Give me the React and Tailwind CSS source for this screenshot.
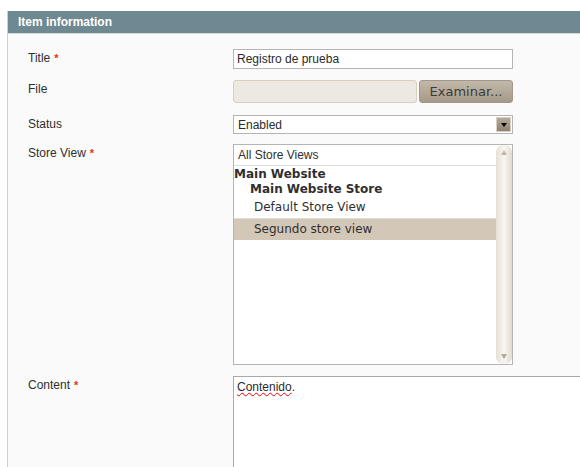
import React from 'react';

const arial = { fontFamily: '"Liberation Sans", Arial, sans-serif' };
const dejavu = { fontFamily: '"DejaVu Sans", Verdana, sans-serif' };

const Req = () => <span className="ml-[4px] text-[11px] font-bold text-[#eb340a]">*</span>;

const Row = ({ label, required, children, className }) => (
    <div className={"flex " + (className || '')}>
        <div className="w-[205px] shrink-0 text-[12px] leading-[18px] text-[#2f2f2f]">
            {label}
            {required && <Req />}
        </div>
        {children}
    </div>
);

const App = () => {
    return (
        <div className="w-[580px] h-[467px] overflow-hidden bg-white pt-[11px]" style={arial}>
            <div className="ml-[7px] w-[600px] border-l border-[#cfcfcf] h-full">
                {/* header */}
                <div className="h-[22px] bg-[#6f8992] pl-[10px] text-[12px] font-bold leading-[22px] text-white">
                    Item information
                </div>
                <div className="h-[1px] bg-[#d6d6d6]" />

                <div className="bg-[#fafafa] h-full pl-[20px] pt-[15px]">
                    <Row label="Title" required className="mb-[11px]">
                        <div className="w-[280px] h-[20px] border border-[#b5b5b5] bg-white px-[3px] text-[12px] leading-[18px] text-[#2b2b2b]">
                            Registro de prueba
                        </div>
                    </Row>

                    <Row label="File" className="mb-[12px]">
                        <div className="flex w-[280px] gap-[2px]">
                            <div className="w-[184px] h-[23px] rounded-[3px] border border-[#dacfbc] bg-[#ede9e2]" />
                            <div
                                className="w-[94px] h-[23px] rounded-[3px] border border-[#a3978a] bg-gradient-to-b from-[#c2b9ab] to-[#a69a88] text-center text-[13px] leading-[21px] text-[#3a3a3a]"
                                style={dejavu}
                            >
                                Examinar...
                            </div>
                        </div>
                    </Row>

                    <Row label="Status" className="mb-[10px]">
                        <div className="flex items-center w-[280px] h-[19px] border border-[#b5b5b5] bg-white pl-[4px] pr-[1px] text-[12px] text-[#2b2b2b]">
                            <span className="flex-1">Enabled</span>
                            <div className="flex h-[15px] w-[15px] items-center justify-center border border-[#d8d0c2] bg-gradient-to-b from-[#b4aa9a] to-[#8f8472]">
                                <div className="h-0 w-0 border-x-[3px] border-t-[4px] border-x-transparent border-t-black" />
                            </div>
                        </div>
                    </Row>

                    <Row label="Store View" required className="mb-[11px]">
                        <div className="flex w-[280px] h-[221px] border border-[#b5b5b5] bg-white">
                            <div className="flex-1 text-[#2f2f2f]">
                                <div className="h-[21px] border-b border-[#dcdcdc] pl-[4px] text-[12px] leading-[20px]">
                                    All Store Views
                                </div>
                                <div style={dejavu} className="pt-[1px] text-[12px]">
                                    <div className="h-[15px] font-bold leading-[15px]">Main Website</div>
                                    <div className="h-[15px] pl-[16px] font-bold leading-[15px]">Main Website Store</div>
                                    <div className="h-[21px] pl-[20px] leading-[21px]">Default Store View</div>
                                    <div className="h-[22px] border-t border-[#e3dbcf] bg-[#d3c7b7] pl-[20px] leading-[21px]">
                                        Segundo store view
                                    </div>
                                </div>
                            </div>
                            {/* scrollbar */}
                            <div className="flex w-[16px] flex-col items-center justify-between rounded-[7px] bg-gradient-to-r from-[#e6dfd3] via-[#f8f6f2] to-[#e3dbcf] py-[5px]">
                                <div className="h-0 w-0 border-x-[3px] border-b-[5px] border-x-transparent border-b-[#c2b8a8]" />
                                <div className="h-0 w-0 border-x-[3px] border-t-[5px] border-x-transparent border-t-[#b5aa99]" />
                            </div>
                        </div>
                    </Row>

                    <Row label="Content" required>
                        <div className="w-[400px] h-[120px] border border-[#a9a9a9] bg-white px-[3px] pt-[1px] text-[12px] leading-[18px] text-[#2b2b2b]">
                            <span className="underline decoration-wavy decoration-[#e00] decoration-1 underline-offset-[1px]">Contenido</span>.
                        </div>
                    </Row>
                </div>
            </div>
        </div>
    );
};

export default App;
